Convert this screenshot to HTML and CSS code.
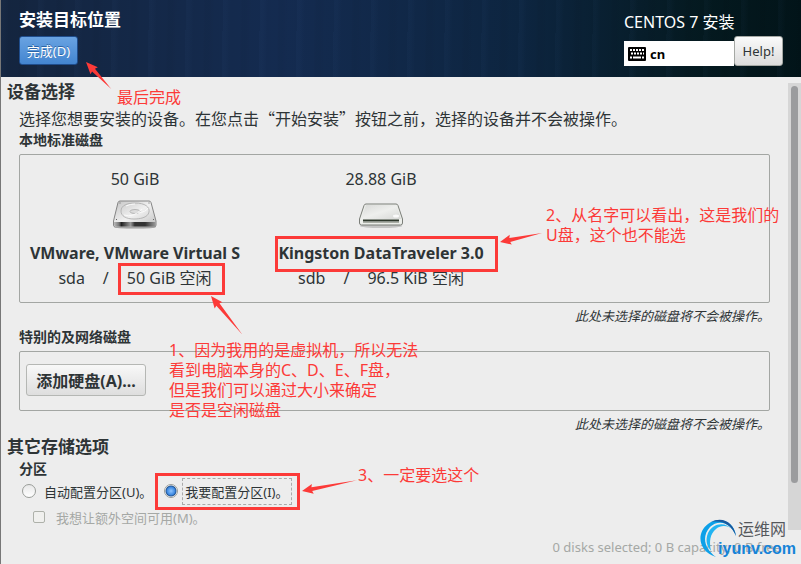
FILE: index.html
```
<!DOCTYPE html>
<html lang="zh-CN">
	<head>
		<meta charset="UTF-8" />
		<meta name="viewport" content="width=device-width, initial-scale=1.0" />
		<title>安装目标位置</title>
		<link rel="stylesheet" href="styles.css">
	</head>
	<body>
		<header class="topbar">
			<div class="topbar-left">
				<h1>安装目标位置</h1>
				<button type="button" class="done-button">完成(D)</button>
			</div>
			<div class="topbar-right">
				<div class="product">CENTOS 7 安装</div>
				<div class="tools">
					<div class="keyboard">
						<svg width="18" height="14" viewBox="0 0 18 14">
							<rect width="18" height="14" rx="1" fill="#000" />
							<path d="M2 3h2m1 0h2m1 0h2m1 0h2m1 0h2M3 6.500h2m1 0h2m1 0h2m1 0h2m1 0h1M2 10.500h2m1 0h8m1 0h2" stroke="#fff" stroke-width="2" fill="none" />
						</svg>
						<span>cn</span>
					</div>
					<button type="button" class="help-button">Help!</button>
				</div>
			</div>
		</header>

		<div class="middle">
			<main>
				<h2>设备选择</h2>
				<p class="intro">选择您想要安装的设备。在您点击“开始安装”按钮之前，选择的设备并不会被操作。</p>

				<h3>本地标准磁盘</h3>
				<div class="panel disks">
					<div class="disk">
						<div class="size">50 GiB</div>
						<svg width="46" height="40" viewBox="0 0 46 40">
							<defs>
								<linearGradient id="metal" x1="0" y1="0" x2="1" y2="1">
									<stop offset="0" stop-color="#c4c4c4" />
									<stop offset="0.5" stop-color="#f0f0f0" />
									<stop offset="1" stop-color="#c0c0c0" />
								</linearGradient>
								<linearGradient id="front" x1="0" y1="0" x2="1" y2="0">
									<stop offset="0" stop-color="#bbb" />
									<stop offset="0.12" stop-color="#777" />
									<stop offset="0.18" stop-color="#222" />
									<stop offset="0.4" stop-color="#999" />
									<stop offset="0.5" stop-color="#333" />
									<stop offset="0.75" stop-color="#333" />
									<stop offset="1" stop-color="#999" />
								</linearGradient>
							</defs>
							<ellipse cx="23" cy="34" rx="21" ry="2" fill="#999" opacity="0.5" />
							<path d="M8 8h29q1.500 0 2 1.500L44 28v4q0 2-2 2H3.500q-2 0-2-2v-4L6 9.500Q6.500 8 8 8z" fill="url(#metal)" stroke="#858585" />
							<path d="M2 29h41.500v3q0 1.500-1.500 1.500H3.500Q2 33.500 2 32z" fill="url(#front)" />
							<path d="M9 18C9 12 16 10 23 10C33 10 38 14 37 19C36 25 27 26 22 26C14 26 9 23 9 18z" fill="none" stroke="#aaa" stroke-width="0.800" />
							<ellipse cx="23" cy="18.500" rx="5" ry="2" fill="#ddd" stroke="#aaa" stroke-width="0.800" />
							<path d="M12 22q9 3 18-6M26 20q8-1 10-5M14 13q4-2 9-2" fill="none" stroke="#fafafa" />
							<path d="M7.500 10h1m28 0h1M4 26.500h1m36 0h1" stroke="#666" />
						</svg>
						<div class="name">VMware, VMware Virtual S</div>
						<div class="details"><span>sda</span><span>/</span><span>50 GiB 空闲</span></div>
					</div>
					<div class="disk">
						<div class="size">28.88 GiB</div>
						<svg width="46" height="40" viewBox="0 0 46 40">
							<ellipse cx="23" cy="33" rx="21" ry="2" fill="#999" opacity="0.5" />
							<path d="M8 11h30q1.500 0 2 1.500L44.500 26v4q0 2-2 2h-39q-2 0-2-2v-4L6 12.500Q6.500 11 8 11z" fill="#eceeea" stroke="#7b7e79" />
							<path d="M8 12h30l5 14H3z" fill="url(#metal)" opacity="0.5" />
							<path d="M5 27.500h36" stroke="#2e382c" stroke-width="1.800" />
							<path d="M5 29.500h36" stroke="#a9ada5" />
							<ellipse cx="38" cy="23" rx="3" ry="1.500" fill="#fafafa" />
						</svg>
						<div class="name">Kingston DataTraveler 3.0</div>
						<div class="details"><span>sdb</span><span>/</span><span>96.5 KiB 空闲</span></div>
					</div>
				</div>
				<p class="hint">此处未选择的磁盘将不会被操作。</p>

				<h3>特别的及网络磁盘</h3>
				<div class="panel special">
					<button type="button" class="add-button">添加硬盘(A)...</button>
				</div>
				<p class="hint">此处未选择的磁盘将不会被操作。</p>

				<h2>其它存储选项</h2>
				<h3>分区</h3>
				<div class="options">
					<input type="radio" id="auto" name="partition" />
					<label for="auto">自动配置分区(U)。</label>
					<input type="radio" id="manual" name="partition" checked />
					<label for="manual" class="focused">我要配置分区(I)。</label>
				</div>
				<div class="options extra">
					<input type="checkbox" id="space" disabled />
					<label for="space">我想让额外空间可用(M)。</label>
				</div>
			</main>
			<div class="scrollbar"><div class="thumb"></div></div>
		</div>

		<footer>0 disks selected; 0 B capacity; 0 B free</footer>

		<div class="watermark">
			<svg width="42" height="42" viewBox="0 0 42 42">
				<path d="M38 19C36 3 20-1 10 7C-2 16 0 34 18 40C7 32 3 20 12 10C20 2 33 5 38 19z" fill="#0da0e8" />
				<path d="M35 13C27 4 15 6 10 16C7 24 9 29 13 34C11 24 12 17 18 12C24 7 31 9 35 13z" fill="#22b4f2" />
				<path d="M13 5C25-1 36 6 38 19C33 7 24 3 13 5z" fill="#17599f" />
			</svg>
			<span class="site-name">运维网</span>
			<span class="site-url">iyunv.com</span>
		</div>

		<!-- red notes drawn over the installer -->
		<div class="notes">
			<svg class="marks" width="801" height="564" viewBox="0 0 801 564">
				<g fill="none" stroke="#fc3a38" stroke-width="3">
					<rect x="119.500" y="264.500" width="104" height="29" />
					<rect x="276.500" y="237.500" width="220" height="33" />
					<rect x="156.500" y="474.500" width="142" height="34" />
				</g>
				<g fill="#fc3a38">
					<path transform="translate(86 62) rotate(47)" d="M0 0l12-5-1 3 26 2-26 2 1 3z" />
					<path transform="translate(500 242) rotate(-12)" d="M0 0l11-5-1 3 33 2-33 2 1 3z" />
					<path transform="translate(211 296) rotate(51)" d="M0 0l12-5-1 3 39 2-39 2 1 3z" />
					<path transform="translate(302 491) rotate(-11)" d="M0 0l11-5-1 3 46 2-46 2 1 3z" />
				</g>
			</svg>
			<p class="note note-done">最后完成</p>
			<p class="note note-usb">2、从名字可以看出，这是我们的<br />U盘，这个也不能选</p>
			<p class="note note-size">1、因为我用的是虚拟机，所以无法<br />看到电脑本身的C、D、E、F盘，<br />但是我们可以通过大小来确定<br />是否是空闲磁盘</p>
			<p class="note note-manual">3、一定要选这个</p>
		</div>
	</body>
</html>
```
FILE: styles.css
```
* {
	box-sizing: border-box;
}

body {
	position: relative;
	display: flex;
	flex-direction: column;
	min-height: 100vh;
	margin: 0;
	border-left: 1px solid #777;
	background-color: #ededed;
	color: #2e3436;
	font-family: "Noto Sans", "Noto Sans CJK SC", sans-serif;
	font-size: 16px;
}

h1,
h2,
h3,
p {
	margin: 0;
}

button,
input {
	margin: 0;
	font-family: inherit;
}

/* Top bar */
.topbar {
	display: flex;
	justify-content: space-between;
	height: 77px;
	padding: 8px 18px 0;
	background:
		repeating-linear-gradient(91deg, rgba(90, 140, 210, 0.03) 0 3px, transparent 8px 17px, rgba(0, 0, 0, 0.03) 20px 23px, transparent 29px 37px),
		linear-gradient(to right, #14253f 0, #142b50 35%, #0d2540 65%, #04191f 88%, #021419 100%);
	color: #fff;
}

h1 {
	margin-bottom: 4px;
	font-size: 17px;
	line-height: 24px;
}

.done-button {
	width: 59px;
	height: 29px;
	padding: 0;
	border: 1px solid #1f4d8c;
	border-radius: 3px;
	background: linear-gradient(#69a3e2, #4385d0);
	color: #fff;
	font-size: 13px;
	text-shadow: 0 -1px #2c64a5;
}

.product {
	font-size: 16px;
	line-height: 28px;
}

.tools {
	display: flex;
	align-items: flex-end;
}

.keyboard {
	display: flex;
	align-items: center;
	gap: 4px;
	width: 110px;
	height: 25px;
	padding: 0 4px;
	background-color: #fff;
	color: #000;
	font-size: 13px;
	font-weight: bold;
}

.help-button {
	width: 49px;
	height: 30px;
	padding: 0;
	border: 1px solid #a5a8a4;
	border-radius: 3px;
	background: linear-gradient(#fafafa, #dcdcdc);
	color: #2e3436;
	font-size: 13px;
}

/* Content */
.middle {
	display: flex;
	flex: 1;
}

main {
	flex: 1;
	padding: 5px 18px 0;
}

h2 {
	margin: 0 0 4px -12px;
	font-size: 17px;
	line-height: 20px;
}

h3 {
	margin-bottom: 6px;
	font-size: 14px;
	line-height: 16px;
}

.intro {
	margin-bottom: 2px;
	font-family: "Noto Sans CJK SC", sans-serif;
	font-size: 16px;
	line-height: 24px;
}

.panel {
	border: 1px solid #a3a6a3;
	border-radius: 2px;
}

.disks {
	display: flex;
	gap: 38px;
	height: 149px;
	padding: 14px 11px 0;
}

.disk {
	display: flex;
	flex-direction: column;
	align-items: center;
	width: 208px;
	white-space: nowrap;
}

.disk svg {
	margin: 4px 0 8px;
}

.size {
	line-height: 20px;
}

.name {
	font-weight: bold;
	line-height: 24px;
}

.details {
	display: flex;
	gap: 18px;
	line-height: 26px;
}

.hint {
	font-size: 13px;
	font-style: italic;
	line-height: 26px;
	text-align: right;
}

.special {
	height: 60px;
	padding: 12px 6px;
}

.add-button {
	width: 120px;
	height: 32px;
	padding: 0;
	border: 1px solid #b5b7b4;
	border-radius: 3px;
	background: linear-gradient(#f8f8f8, #dedede);
	color: #2e3436;
	font-size: 16px;
	font-weight: bold;
}

.options {
	display: flex;
	align-items: center;
	height: 16px;
	padding-left: 3px;
	font-size: 13px;
}

.options label {
	margin-left: 8px;
}

.options input {
	appearance: none;
	width: 14px;
	height: 14px;
	border: 1px solid #9a9d99;
	background: linear-gradient(#e8e8e8, #fff);
}

.options input[type="radio"] {
	border-radius: 50%;
}

.options input[type="radio"]:checked {
	background: radial-gradient(circle at 50% 50%, #8fc5ff 0, #3b87e0 4px, #22538f 5px, #fff 6px);
}

.options #manual {
	margin-left: 12px;
}

.options .focused {
	margin-left: 4px;
	padding: 3px 2px;
	border: 1px dashed #aaa;
}

.extra {
	margin-top: 10px;
	padding-left: 14px;
	color: #a5a8a5;
}

.extra label {
	margin-left: 11px;
}

.options input[type="checkbox"] {
	width: 12px;
	height: 12px;
	border-radius: 2px;
	border-color: #aeb1aa;
	background: #f0f0ee;
}

.scrollbar {
	width: 13px;
	margin-top: 6px;
	padding: 3px;
	background-color: #d6d6d6;
}

.thumb {
	width: 7px;
	height: 90%;
	border-radius: 4px;
	background-color: #9b9c9e;
}

footer {
	height: 34px;
	padding-right: 20px;
	color: #a5a8a5;
	font-size: 13px;
	line-height: 34px;
	text-align: right;
}

/* Watermark */
.watermark {
	position: absolute;
	right: 5px;
	bottom: 5px;
	width: 98px;
	height: 42px;
}

.site-name,
.site-url {
	position: absolute;
	line-height: 20px;
}

.site-name {
	top: 2px;
	left: 40px;
	color: #55585c;
	font-size: 16px;
}

.site-url {
	right: 0;
	bottom: 0;
	color: #1583d8;
	font-family: "Liberation Sans", Arial, sans-serif;
	font-size: 16px;
	font-weight: bold;
}

/* Notes */
.notes {
	position: absolute;
	top: 0;
	left: -1px;
	pointer-events: none;
}

.marks {
	display: block;
}

.note {
	position: absolute;
	color: #fc3a38;
	font-size: 16px;
	line-height: 20px;
	white-space: nowrap;
}

.note-done {
	top: 87px;
	left: 117px;
}

.note-usb {
	top: 205px;
	left: 546px;
}

.note-size {
	top: 340px;
	left: 169px;
}

.note-manual {
	top: 465px;
	left: 358px;
}
```
